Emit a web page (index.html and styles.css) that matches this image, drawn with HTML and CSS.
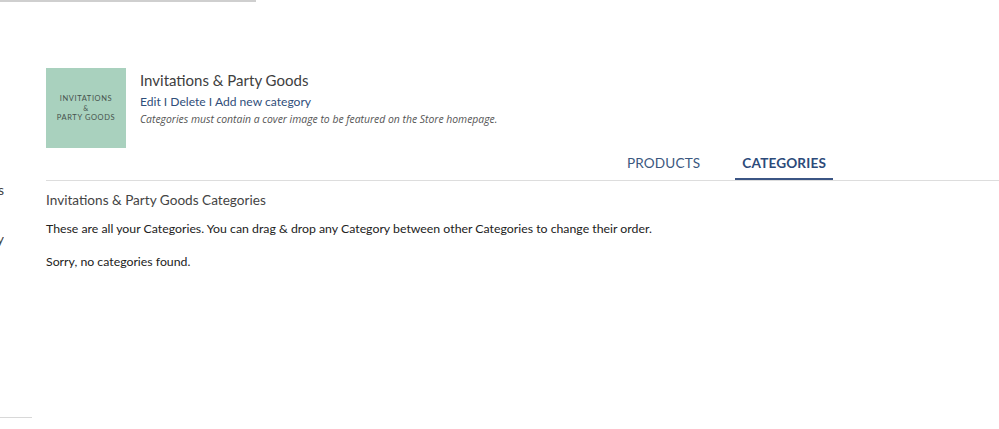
FILE: index.html
```html
<!DOCTYPE html>
<html>
<head>
<meta charset="utf-8">
<link rel="stylesheet" href="styles.css">
</head>
<body>
<div class="topline"></div>
<div class="layout">
  <aside class="sidebar">
    <div class="side-item side-item-1"><span>Categories</span></div>
    <div class="side-item side-item-2"><span>Inventory</span></div>
  </aside>
  <main class="main">
    <section class="header">
      <div class="thumb">
        <span>INVITATIONS</span>
        <span class="amp">&amp;</span>
        <span>PARTY GOODS</span>
      </div>
      <div class="info">
        <h1 class="title">Invitations &amp; Party Goods</h1>
        <div class="links"><a href="#">Edit</a> I <a href="#">Delete</a> I <a href="#">Add new category</a></div>
        <p class="note">Categories must contain a cover image to be featured on the Store homepage.</p>
      </div>
    </section>
    <nav class="tabs">
      <a class="tab" href="#">PRODUCTS</a>
      <a class="tab active" href="#">CATEGORIES</a>
    </nav>
    <section class="content">
      <h2 class="heading">Invitations &amp; Party Goods Categories</h2>
      <p class="desc">These are all your Categories. You can drag &amp; drop any Category between other Categories to change their order.</p>
      <p class="empty">Sorry, no categories found.</p>
    </section>
  </main>
</div>
</body>
</html>
```
FILE: styles.css
```css
* { box-sizing: border-box; }
html, body { margin: 0; padding: 0; background: #fff; }
body {
  font-family: "Lato", "Open Sans", "Liberation Sans", sans-serif;
  color: #333;
  width: 999px;
  height: 429px;
  overflow: hidden;
}
.topline { width: 256px; height: 2px; background: #cfcfcf; }
.layout { display: flex; }
.sidebar {
  width: 32px;
  height: 416px;
  border-bottom: 1px solid #d8d8d8;
  flex: none;
  padding-top: 178px;
}
.side-item {
  width: 4px;
  overflow: hidden;
  display: flex;
  justify-content: flex-end;
  font-size: 14px;
  color: #444;
  white-space: nowrap;
  height: 20px;
  line-height: 20px;
}
.side-item-2 { margin-top: 29px; }
.main { flex: 1; margin-left: 14px; padding-top: 66px; }
.header { display: flex; align-items: flex-start; }
.thumb {
  width: 80px; height: 80px;
  background: #a9d1be;
  display: flex; flex-direction: column; align-items: center; justify-content: center;
  font-size: 7.5px; letter-spacing: 0.6px; color: #46524c;
  line-height: 10px;
  flex: none;
}
.thumb .amp { font-size: 7px; line-height: 9px; }
.info { margin-left: 14px; padding-top: 2px; }
.title { margin: 0; font-size: 15px; font-weight: 400; color: #404040; line-height: 20px; }
.links { font-size: 12.1px; color: #2f4e7a; margin-top: 4px; line-height: 16px; }
.links a { color: #2f4e7a; text-decoration: none; }
.note { margin: 3px 0 0; font-family: "Open Sans", "Lato", sans-serif; font-size: 10.4px; font-style: italic; color: #555; line-height: 12px; }
.tabs {
  display: flex; justify-content: flex-end;
  padding-right: 166px;
  border-bottom: 1px solid #dddddd;
  margin-top: 4px;
}
.tab {
  font-size: 13.6px; letter-spacing: 0.15px; color: #3b5880; text-decoration: none;
  padding: 3px 7px 7px; line-height: 16px;
  border-bottom: 2px solid transparent;
  margin-left: 28px;
}
.tab.active { font-weight: 700; color: #2c4a7a; border-bottom-color: #3b5584; }
.content { padding-top: 10px; }
.heading { margin: 0; font-size: 13.6px; font-weight: 400; color: #444; line-height: 18px; }
.desc { margin: 12px 0 0; font-size: 12.3px; color: #222; line-height: 16px; }
.empty { margin: 17px 0 0; font-size: 12.3px; color: #222; line-height: 16px; }
```
